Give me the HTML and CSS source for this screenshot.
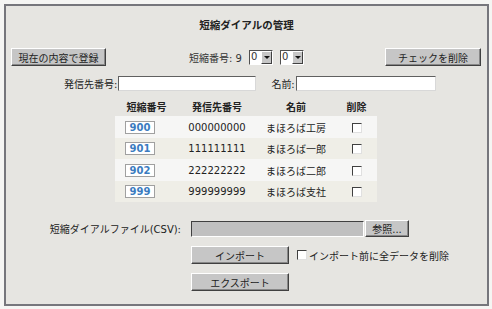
FILE: index.html
```html
<!DOCTYPE html>
<html lang="ja">
<head>
<meta charset="utf-8">
<link rel="stylesheet" href="styles.css">
</head>
<body>
<div class="panel">
  <div class="title">短縮ダイアルの管理</div>
  <div class="toolbar">
    <span class="btn btn-save">現在の内容で登録</span>
    <div class="code-pick">
      <span class="code-label">短縮番号: 9</span>
      <span class="sel"><span class="sel-val">0</span><span class="sel-arrow"></span></span>
      <span class="sel"><span class="sel-val">0</span><span class="sel-arrow"></span></span>
    </div>
    <span class="btn btn-del">チェックを削除</span>
  </div>
  <div class="form-row">
    <label class="lbl">発信先番号:</label><span class="txt txt-num"></span>
    <label class="lbl lbl-name">名前:</label><span class="txt txt-name"></span>
  </div>
  <table class="list">
    <thead>
      <tr><th class="c1">短縮番号</th><th class="c2">発信先番号</th><th class="c3">名前</th><th class="c4">削除</th></tr>
    </thead>
    <tbody>
      <tr><td class="c1"><span class="code">900</span></td><td class="c2">000000000</td><td class="c3">まほろば工房</td><td class="c4"><span class="chk"></span></td></tr>
      <tr><td class="c1"><span class="code">901</span></td><td class="c2">111111111</td><td class="c3">まほろば一郎</td><td class="c4"><span class="chk"></span></td></tr>
      <tr><td class="c1"><span class="code">902</span></td><td class="c2">222222222</td><td class="c3">まほろば二郎</td><td class="c4"><span class="chk"></span></td></tr>
      <tr><td class="c1"><span class="code">999</span></td><td class="c2">999999999</td><td class="c3">まほろば支社</td><td class="c4"><span class="chk"></span></td></tr>
    </tbody>
  </table>
  <div class="io">
    <div class="io-row">
      <span class="io-label">短縮ダイアルファイル(CSV):</span>
      <div class="io-ctrl"><span class="file"></span><span class="btn btn-browse">参照...</span></div>
    </div>
    <div class="io-row">
      <span class="io-label"></span>
      <div class="io-ctrl"><span class="btn btn-io">インポート</span><span class="chk chk-clear"></span><span class="clear-text">インポート前に全データを削除</span></div>
    </div>
    <div class="io-row">
      <span class="io-label"></span>
      <div class="io-ctrl"><span class="btn btn-io">エクスポート</span></div>
    </div>
  </div>
</div>
</body>
</html>
```
FILE: styles.css
```css
* { box-sizing: border-box; }
html, body { margin: 0; padding: 0; }
body {
  background: #f5f5f3;
  padding: 4px 3px 3px 4px;
  font-family: "DejaVu Sans", "Noto Sans CJK JP", sans-serif;
  font-size: 10px;
  color: #222;
}
.panel {
  width: 485px;
  height: 302px;
  border: 2px solid #76767c;
  background: #e6e5e1;
  display: flex;
  flex-direction: column;
}
.title {
  margin-top: 12px;
  height: 14px;
  line-height: 14px;
  text-align: center;
  font-weight: bold;
  font-size: 10.5px;
}
.btn {
  display: inline-flex;
  align-items: center;
  justify-content: center;
  height: 18px;
  background: #c6c6c6;
  border: 1px solid;
  border-color: #ffffff #404040 #404040 #ffffff;
  box-shadow: inset -1px -1px 0 #888;
  color: #222;
  white-space: nowrap;
}
.toolbar {
  margin-top: 16px;
  height: 18px;
  padding: 0 6px 0 5px;
  display: flex;
  align-items: center;
  justify-content: space-between;
}
.btn-save { width: 95px; }
.btn-del { width: 96px; }
.code-pick {
  display: flex;
  align-items: center;
  gap: 3px;
  margin-left: 2px;
  color: #333;
}
.sel {
  display: inline-flex;
  width: 24px;
  height: 15px;
  border: 1px solid;
  border-color: #505050 #fff #fff #505050;
  background: #fff;
  margin-left: 4px;
}
.sel + .sel { margin-left: 4px; }
.sel-val { flex: 1; padding-left: 1px; line-height: 12px; font-size: 10px; }
.sel-arrow {
  width: 11px;
  background: #c6c6c6;
  border: 1px solid;
  border-color: #fff #404040 #404040 #fff;
  position: relative;
}
.sel-arrow::after {
  content: "";
  position: absolute;
  left: 2px;
  top: 4px;
  border-left: 3px solid transparent;
  border-right: 3px solid transparent;
  border-top: 3px solid #111;
}
.form-row {
  margin-top: 10px;
  height: 15px;
  display: flex;
  align-items: center;
  padding-left: 58px;
}
.lbl { color: #222; }
.lbl-name { margin-left: 15px; }
.txt {
  height: 15px;
  background: #fff;
  border: 1px solid;
  border-color: #606060 #d8d8d8 #d8d8d8 #606060;
  margin-left: 1px;
}
.txt-num { width: 138px; }
.txt-name { width: 140px; }
.list {
  margin: 5px 0 0 109px;
  border-collapse: collapse;
  width: 262px;
}
.list th {
  height: 20px;
  font-weight: bold;
  padding: 0;
  text-align: center;
}
.list td {
  padding: 0;
  text-align: center;
  height: 22px;
}
.list tbody tr:nth-child(odd) { background: #f6f6f5; }
.list tbody tr:nth-child(even) { background: #efeee7; }
.list tbody tr:nth-child(even) td { height: 21px; }
.c1 { width: 63px; }
.c2 { width: 78px; }
.c3 { width: 80px; }
.c4 { width: 41px; }
.list td.c1 { text-align: left; padding-left: 10px; }
.code {
  display: inline-block;
  width: 30px;
  height: 13px;
  line-height: 11px;
  text-align: center;
  background: #fff;
  border: 1px solid #a0a0a0;
  color: #3b7bc0;
  font-weight: bold;
  vertical-align: middle;
}
.chk {
  display: inline-block;
  width: 10px;
  height: 10px;
  background: #fff;
  border: 1px solid;
  border-color: #404040 #e0e0e0 #e0e0e0 #404040;
  vertical-align: middle;
}
.io {
  margin-top: 18px;
  display: flex;
  flex-direction: column;
  gap: 9px;
}
.io-row {
  display: flex;
  align-items: center;
  min-height: 17px;
}
.io-label {
  width: 185px;
  padding-right: 10px;
  text-align: right;
  color: #222;
}
.io-ctrl { display: flex; align-items: center; }
.file {
  width: 173px;
  height: 16px;
  background: #c0c0c0;
  border: 1px solid;
  border-color: #404040 #fff #fff #404040;
}
.btn-browse { width: 44px; height: 17px; margin-left: 1px; }
.btn-io { width: 98px; height: 18px; }
.chk-clear { margin-left: 8px; margin-right: 2px; }
.clear-text { color: #222; }
```
